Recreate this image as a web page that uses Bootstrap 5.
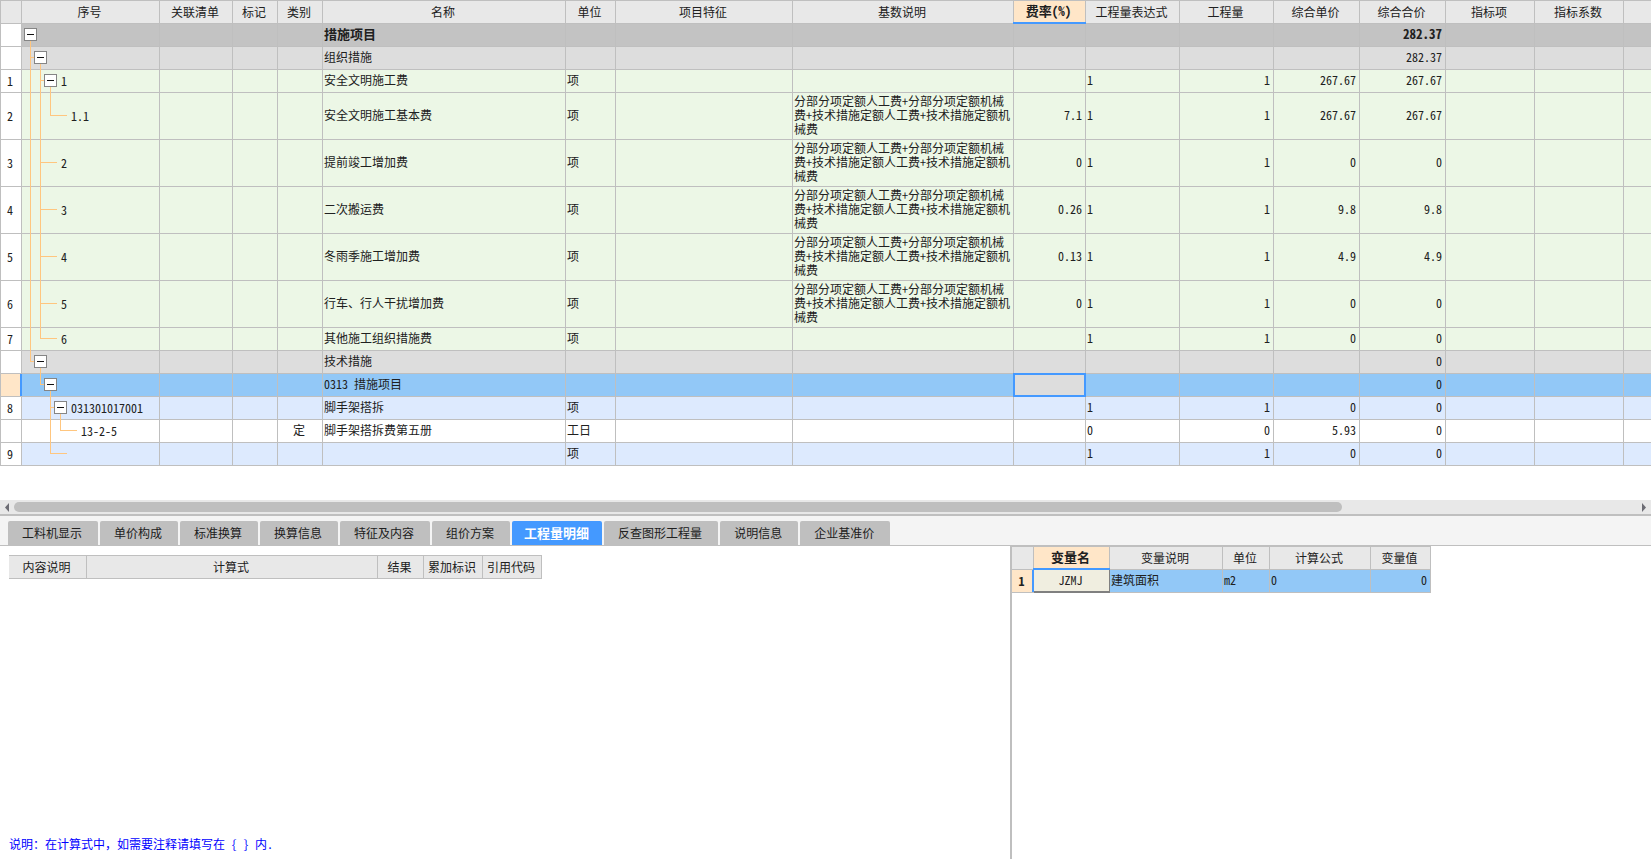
<!DOCTYPE html>
<html lang="zh-CN">
<head>
<meta charset="utf-8">
<meta name="viewport" content="width=device-width, initial-scale=1">
<title>措施项目</title>
<link rel="stylesheet" href="https://cdn.jsdelivr.net/npm/bootstrap@5.3.0/dist/css/bootstrap.min.css">
<style>
:root {
  --line: #bfbfbf;
  --head: #e8e8e8;
  --accent: #4499ff;
  --peach: #ffe6c8;
  --branch: #ffc67f;
  --ink: #202020;
}
body {
  font: 12px/14px "Noto Sans Mono CJK SC", "Noto Sans CJK SC", sans-serif;
  color: var(--ink);
  background: #fff;
}

/* data sheets */
.sheet {
  table-layout: fixed;
  border-collapse: separate;
  border-spacing: 0;
  border-top: 1px solid var(--line);
  font-size: 12px;
  line-height: 14px;
}
.sheet th, .sheet td {
  height: 23px;
  padding: 0 3px 2px 1px;
  border: 0 solid var(--line);
  border-width: 0 1px 1px 0;
  vertical-align: middle;
  font-weight: 400;
  color: var(--ink);
  position: relative;
  white-space: nowrap;
}
.sheet thead th { background-color: var(--head); text-align: center; padding: 0 3px 0 1px; }
.sheet tbody th { text-align: center; padding: 0 3px 0 1px; background-color: #fff; }
.sheet thead th.picked { background-color: var(--peach); font-size: 13px; font-weight: 700; padding-bottom: 2px; }
.sheet thead th.picked::after {
  content: ""; position: absolute; left: -1px; right: -1px; bottom: -1px; height: 2px;
  background: var(--accent);
}
.sheet tr.tall > * { height: 47px; }
.sheet tr.total td { background-color: #c3c3c3; font-size: 13px; font-weight: 700; }
.sheet tr.group td { background-color: #ddd; }
.sheet tr.work td { background-color: #ecf7e6; }
.sheet tr.item td { background-color: #ddeafe; }
.sheet tr.current td { background-color: #92c8f7; }
.sheet tr.current th { background-color: var(--peach); }
.sheet tr.current th::after {
  content: ""; position: absolute; top: 0; bottom: 0; right: -1px; width: 2px;
  background: var(--accent);
}
.sheet .basis { white-space: normal; padding-right: 0; }
.sheet tr.current td.cursor { background-color: #ddd; }
.sheet td.cursor::after {
  content: ""; position: absolute; inset: -1px; border: 2px solid var(--accent);
}
.main-sheet { border-left: 1px solid var(--line); min-width: 1651px; }
.main-sheet tr > :last-child { border-right-width: 0; }
.main-pane { padding-bottom: 34px; overflow: hidden; }

/* tree column */
.sheet td.tree { padding: 0 0 0 8px; }
.node { display: flex; height: 23px; margin-bottom: -1px; position: relative; z-index: 1; }
.tall .node { height: 47px; }
.guide {
  flex: 0 0 10px;
  background: linear-gradient(var(--branch), var(--branch)) left top / 1px 100% no-repeat;
}
.guide.tee {
  background:
    linear-gradient(var(--branch), var(--branch)) left top / 1px 100% no-repeat,
    linear-gradient(var(--branch), var(--branch)) left calc(50% - 1px) / 100% 1px no-repeat;
}
.guide.elbow {
  background:
    linear-gradient(var(--branch), var(--branch)) left top / 1px calc(50% - 1px) no-repeat,
    linear-gradient(var(--branch), var(--branch)) left calc(50% - 1px) / 100% 1px no-repeat;
}
.guide.blank { background: none; }
.stub { flex: 0 0 7px; display: flex; align-items: center; padding-bottom: 2px; }
.stub.leaf { background: linear-gradient(var(--branch), var(--branch)) left calc(50% - 1px) / 100% 1px no-repeat; }
.stub.open { background: linear-gradient(var(--branch), var(--branch)) left bottom / 1px 50% no-repeat; }
.toggle {
  flex: 0 0 13px; width: 13px; height: 13px; margin-left: -6px; padding: 0;
  border: 1px solid #858585; background: #fff; display: flex;
}
.node .no { align-self: center; padding: 0 0 2px 4px; }

/* horizontal scroll bar */
.scroller { height: 16px; background: var(--head); border-bottom: 2px solid var(--line); }
.scroller button { flex: 0 0 14px; border: 0; background: none; padding: 0; display: flex; }
.thumb { height: 10px; border-radius: 5px; background: var(--line); }

/* detail tabs */
.tabs-bar { background: #f4f4f4; border-bottom: 1px solid var(--line); padding: 5px 8px 0; gap: 2px; }
.tabs-bar .nav-link {
  height: 24px; padding: 0 16px 0 14px; border: 0; border-radius: 2px 2px 0 0;
  background: var(--line); color: var(--ink); line-height: 24px; white-space: nowrap;
}
.tabs-bar .nav-link.active {
  padding: 0 13px 0 12px; background: var(--accent); color: #fff; font-size: 13px; font-weight: 700;
}

/* lower area */
.detail { display: grid; grid-template-columns: 1010fr 641fr; }
.formula-pane { padding: 9px 9px 8px; min-width: 0; }
.formula-sheet { width: 533px; }
.variable-pane { border-left: 2px solid var(--line); min-width: 0; }
.variable-sheet { width: 419px; }
.sheet tr.current th.fw-bold { font-weight: 700; }
.sheet tr.current td.name { background-color: #f0eee0; border-right: 1px solid #808080; }
.sheet td.name::after {
  content: ""; position: absolute; left: 0; right: -1px; bottom: -1px; height: 2px; background: #808080;
}
.note { color: #0000ff; }
</style>
</head>
<body>
<main class="d-flex flex-column min-vh-100">
  <section class="main-pane" aria-label="措施项目">
    <table class="table sheet main-sheet w-100 mb-0">
      <colgroup>
        <col style="width:21px"><col style="width:138px"><col style="width:73px"><col style="width:45px"><col style="width:45px"><col style="width:243px"><col style="width:50px"><col style="width:177px"><col style="width:221px"><col style="width:72px"><col style="width:94px"><col style="width:94px"><col style="width:86px"><col style="width:86px"><col style="width:89px"><col style="width:89px"><col>
      </colgroup>
      <thead>
        <tr><th></th><th scope="col">序号</th><th scope="col">关联清单</th><th scope="col">标记</th><th scope="col">类别</th><th scope="col">名称</th><th scope="col">单位</th><th scope="col">项目特征</th><th scope="col">基数说明</th><th scope="col" class="picked">费率(%)</th><th scope="col">工程量表达式</th><th scope="col">工程量</th><th scope="col">综合单价</th><th scope="col">综合合价</th><th scope="col">指标项</th><th scope="col">指标系数</th><th></th></tr>
      </thead>
      <tbody>
        <tr class="total"><th></th>
          <td class="tree"><div class="node"><span class="stub open"><button class="toggle" type="button" aria-label="折叠"><svg width="11" height="11"><path d="M2 5h7v1H2z" fill="#111"/></svg></button></span></div></td>
          <td></td><td></td><td></td><td>措施项目</td><td></td><td></td><td></td><td></td><td></td><td></td><td></td><td class="text-end">282.37</td><td></td><td></td><td></td></tr>
        <tr class="group"><th></th>
          <td class="tree"><div class="node"><span class="guide tee"></span><span class="stub open"><button class="toggle" type="button" aria-label="折叠"><svg width="11" height="11"><path d="M2 5h7v1H2z" fill="#111"/></svg></button></span></div></td>
          <td></td><td></td><td></td><td>组织措施</td><td></td><td></td><td></td><td></td><td></td><td></td><td></td><td class="text-end">282.37</td><td></td><td></td><td></td></tr>
        <tr class="work"><th scope="row">1</th>
          <td class="tree"><div class="node"><span class="guide"></span><span class="guide tee"></span><span class="stub open"><button class="toggle" type="button" aria-label="折叠"><svg width="11" height="11"><path d="M2 5h7v1H2z" fill="#111"/></svg></button></span><span class="no">1</span></div></td>
          <td></td><td></td><td></td><td>安全文明施工费</td><td>项</td><td></td><td></td><td></td><td>1</td><td class="text-end">1</td><td class="text-end">267.67</td><td class="text-end">267.67</td><td></td><td></td><td></td></tr>
        <tr class="work tall"><th scope="row">2</th>
          <td class="tree"><div class="node"><span class="guide"></span><span class="guide"></span><span class="guide elbow"></span><span class="stub leaf"></span><span class="no">1.1</span></div></td>
          <td></td><td></td><td></td><td>安全文明施工基本费</td><td>项</td><td></td><td class="basis">分部分项定额人工费+分部分项定额机械费+技术措施定额人工费+技术措施定额机械费</td><td class="text-end">7.1</td><td>1</td><td class="text-end">1</td><td class="text-end">267.67</td><td class="text-end">267.67</td><td></td><td></td><td></td></tr>
        <tr class="work tall"><th scope="row">3</th>
          <td class="tree"><div class="node"><span class="guide"></span><span class="guide tee"></span><span class="stub leaf"></span><span class="no">2</span></div></td>
          <td></td><td></td><td></td><td>提前竣工增加费</td><td>项</td><td></td><td class="basis">分部分项定额人工费+分部分项定额机械费+技术措施定额人工费+技术措施定额机械费</td><td class="text-end">0</td><td>1</td><td class="text-end">1</td><td class="text-end">0</td><td class="text-end">0</td><td></td><td></td><td></td></tr>
        <tr class="work tall"><th scope="row">4</th>
          <td class="tree"><div class="node"><span class="guide"></span><span class="guide tee"></span><span class="stub leaf"></span><span class="no">3</span></div></td>
          <td></td><td></td><td></td><td>二次搬运费</td><td>项</td><td></td><td class="basis">分部分项定额人工费+分部分项定额机械费+技术措施定额人工费+技术措施定额机械费</td><td class="text-end">0.26</td><td>1</td><td class="text-end">1</td><td class="text-end">9.8</td><td class="text-end">9.8</td><td></td><td></td><td></td></tr>
        <tr class="work tall"><th scope="row">5</th>
          <td class="tree"><div class="node"><span class="guide"></span><span class="guide tee"></span><span class="stub leaf"></span><span class="no">4</span></div></td>
          <td></td><td></td><td></td><td>冬雨季施工增加费</td><td>项</td><td></td><td class="basis">分部分项定额人工费+分部分项定额机械费+技术措施定额人工费+技术措施定额机械费</td><td class="text-end">0.13</td><td>1</td><td class="text-end">1</td><td class="text-end">4.9</td><td class="text-end">4.9</td><td></td><td></td><td></td></tr>
        <tr class="work tall"><th scope="row">6</th>
          <td class="tree"><div class="node"><span class="guide"></span><span class="guide tee"></span><span class="stub leaf"></span><span class="no">5</span></div></td>
          <td></td><td></td><td></td><td>行车、行人干扰增加费</td><td>项</td><td></td><td class="basis">分部分项定额人工费+分部分项定额机械费+技术措施定额人工费+技术措施定额机械费</td><td class="text-end">0</td><td>1</td><td class="text-end">1</td><td class="text-end">0</td><td class="text-end">0</td><td></td><td></td><td></td></tr>
        <tr class="work"><th scope="row">7</th>
          <td class="tree"><div class="node"><span class="guide"></span><span class="guide elbow"></span><span class="stub leaf"></span><span class="no">6</span></div></td>
          <td></td><td></td><td></td><td>其他施工组织措施费</td><td>项</td><td></td><td></td><td></td><td>1</td><td class="text-end">1</td><td class="text-end">0</td><td class="text-end">0</td><td></td><td></td><td></td></tr>
        <tr class="group"><th></th>
          <td class="tree"><div class="node"><span class="guide elbow"></span><span class="stub open"><button class="toggle" type="button" aria-label="折叠"><svg width="11" height="11"><path d="M2 5h7v1H2z" fill="#111"/></svg></button></span></div></td>
          <td></td><td></td><td></td><td>技术措施</td><td></td><td></td><td></td><td></td><td></td><td></td><td></td><td class="text-end">0</td><td></td><td></td><td></td></tr>
        <tr class="current"><th></th>
          <td class="tree"><div class="node"><span class="guide blank"></span><span class="guide elbow"></span><span class="stub open"><button class="toggle" type="button" aria-label="折叠"><svg width="11" height="11"><path d="M2 5h7v1H2z" fill="#111"/></svg></button></span></div></td>
          <td></td><td></td><td></td><td>0313 措施项目</td><td></td><td></td><td></td><td class="cursor"></td><td></td><td></td><td></td><td class="text-end">0</td><td></td><td></td><td></td></tr>
        <tr class="item"><th scope="row">8</th>
          <td class="tree"><div class="node"><span class="guide blank"></span><span class="guide blank"></span><span class="guide tee"></span><span class="stub open"><button class="toggle" type="button" aria-label="折叠"><svg width="11" height="11"><path d="M2 5h7v1H2z" fill="#111"/></svg></button></span><span class="no">031301017001</span></div></td>
          <td></td><td></td><td></td><td>脚手架搭拆</td><td>项</td><td></td><td></td><td></td><td>1</td><td class="text-end">1</td><td class="text-end">0</td><td class="text-end">0</td><td></td><td></td><td></td></tr>
        <tr><th></th>
          <td class="tree"><div class="node"><span class="guide blank"></span><span class="guide blank"></span><span class="guide"></span><span class="guide elbow"></span><span class="stub leaf"></span><span class="no">13-2-5</span></div></td>
          <td></td><td></td><td class="text-center">定</td><td>脚手架搭拆费第五册</td><td>工日</td><td></td><td></td><td></td><td>0</td><td class="text-end">0</td><td class="text-end">5.93</td><td class="text-end">0</td><td></td><td></td><td></td></tr>
        <tr class="item"><th scope="row">9</th>
          <td class="tree"><div class="node"><span class="guide blank"></span><span class="guide blank"></span><span class="guide elbow"></span><span class="stub leaf"></span></div></td>
          <td></td><td></td><td></td><td></td><td>项</td><td></td><td></td><td></td><td>1</td><td class="text-end">1</td><td class="text-end">0</td><td class="text-end">0</td><td></td><td></td><td></td></tr>
      </tbody>
    </table>
  </section>

  <div class="scroller d-flex align-items-center">
    <button type="button" aria-label="向左滚动"><svg width="14" height="10"><path d="M9 1v9L5 5.5z" fill="#6c6c74"/></svg></button>
    <div class="flex-grow-1"><div class="thumb" style="width:81.8%"></div></div>
    <button type="button" aria-label="向右滚动"><svg width="14" height="10"><path d="M5 1v9l4-4.5z" fill="#6c6c74"/></svg></button>
  </div>

  <div class="tabs-bar nav flex-nowrap" role="tablist">
    <button class="nav-link" type="button" role="tab">工料机显示</button>
    <button class="nav-link" type="button" role="tab">单价构成</button>
    <button class="nav-link" type="button" role="tab">标准换算</button>
    <button class="nav-link" type="button" role="tab">换算信息</button>
    <button class="nav-link" type="button" role="tab">特征及内容</button>
    <button class="nav-link" type="button" role="tab">组价方案</button>
    <button class="nav-link active" type="button" role="tab" aria-selected="true">工程量明细</button>
    <button class="nav-link" type="button" role="tab">反查图形工程量</button>
    <button class="nav-link" type="button" role="tab">说明信息</button>
    <button class="nav-link" type="button" role="tab">企业基准价</button>
  </div>

  <div class="detail flex-grow-1">
    <section class="formula-pane d-flex flex-column">
      <table class="table sheet formula-sheet mb-0">
        <colgroup><col style="width:78px"><col style="width:291px"><col style="width:46px"><col style="width:59px"><col style="width:59px"></colgroup>
        <thead><tr><th scope="col">内容说明</th><th scope="col">计算式</th><th scope="col">结果</th><th scope="col">累加标识</th><th scope="col">引用代码</th></tr></thead>
      </table>
      <p class="note mt-auto mb-0">说明：在计算式中，如需要注释请填写在 { } 内.</p>
    </section>
    <section class="variable-pane">
      <table class="table sheet variable-sheet mb-0">
        <colgroup><col style="width:22px"><col style="width:76px"><col style="width:113px"><col style="width:47px"><col style="width:101px"><col style="width:60px"></colgroup>
        <thead><tr><th></th><th scope="col" class="picked">变量名</th><th scope="col">变量说明</th><th scope="col">单位</th><th scope="col">计算公式</th><th scope="col">变量值</th></tr></thead>
        <tbody><tr class="current"><th scope="row" class="fw-bold">1</th><td class="name text-center">JZMJ</td><td>建筑面积</td><td>m2</td><td>0</td><td class="text-end">0</td></tr></tbody>
      </table>
    </section>
  </div>
</main>
<script src="https://cdn.jsdelivr.net/npm/bootstrap@5.3.0/dist/js/bootstrap.bundle.min.js"></script>
</body>
</html>
